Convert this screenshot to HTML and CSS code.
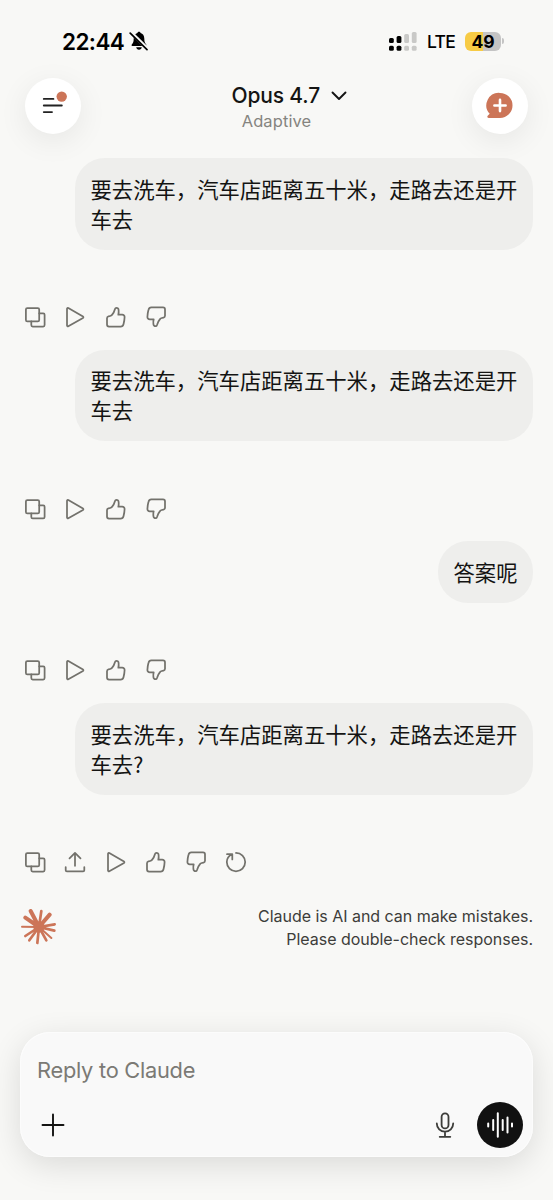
FILE: index.html
```html
<!DOCTYPE html>
<html lang="zh">
<head>
<meta charset="utf-8">
<title>Claude</title>
<link rel="stylesheet" href="styles.css">
</head>
<body>
<svg class="defs" width="0" height="0">
  <symbol id="copy" viewBox="0 0 24 24"><rect x="2.9" y="3" width="13.300" height="13.300" rx="1.4"/><path d="M16.200 8.3h4a1.4 1.4 0 0 1 1.4 1.4v10.400a1.4 1.4 0 0 1-1.4 1.4H9.7a1.4 1.4 0 0 1-1.4-1.4V16.300"/></symbol>
  <symbol id="play" viewBox="0 0 24 24"><path d="M4 3.800v16.700a.9.9 0 0 0 1.300.8L20 12.900a.9.9 0 0 0 0-1.500L5.300 3a.9.9 0 0 0-1.300.8z"/></symbol>
  <symbol id="up" viewBox="0 0 24 24"><path d="M3 13.300v6.300a2 2 0 0 0 2 2h11.500a3 3 0 0 0 3-2.300q1-3.600 1.100-7.200a2.300 2.300 0 0 0-2.300-2.400h-4q.6-2 .3-4.700A2.200 2.200 0 0 0 12.400 2.800c-.8 0-1.200.5-1.400 1.200Q10.200 7.300 8 9.900c-.5.600-1 .9-1.800 1.100l-1.700.4A2 2 0 0 0 3 13.300z"/></symbol>
  <symbol id="share" viewBox="0 0 24 24"><path d="M12 15.800V3M6.500 8.300 12 2.900l5.500 5.400M2.700 17v3.200a1.200 1.200 0 0 0 1.200 1.200h16.200a1.200 1.200 0 0 0 1.200-1.200V17"/></symbol>
  <symbol id="retry" viewBox="0 0 24 24"><path d="M12 2.900a9.200 9.200 0 1 1-9.200 9.200c0-3.400 1.900-6.100 5.200-8M3 4.200h5.300v5.200"/></symbol>
</svg>
<div class="screen">
  <div class="status">
    <div class="clock"><span class="time">22:44</span>
      <svg width="20" height="20" viewBox="0 0 20 20"><path d="M3.300 15h13.400c.8 0 1-.8.500-1.400-1.500-1.600-1.900-2.900-1.900-6 0-3.100-1.600-5-3.700-5.500C11.400 1.200 10.800.7 10 .7s-1.400.5-1.600 1.400c-2.100.5-3.700 2.400-3.700 5.500 0 3.100-.4 4.400-1.900 6-.5.6-.3 1.400.5 1.400zM7.200 16.300h5.600c-.2 1.500-1.300 2.500-2.800 2.500s-2.600-1-2.800-2.500z"/><path class="cut" d="M2 1.400 19 18.200"/><path class="slash" d="M1.200 2.200 18 18.600"/></svg>
    </div>
    <div class="radio">
      <svg width="28" height="20" viewBox="0 0 28 20"><rect x="0" y="7" width="4.800" height="5" rx="1.500"/><rect x="7.600" y="5" width="4.800" height="7" rx="1.500"/><g class="dim"><rect x="15.200" y="3" width="4.800" height="9" rx="1.500"/><rect x="22.800" y="1" width="4.800" height="11" rx="1.500"/><rect x="15.200" y="14.800" width="4.800" height="5" rx="1.500"/><rect x="22.800" y="14.800" width="4.800" height="5" rx="1.500"/></g><rect x="0" y="14.800" width="4.800" height="5" rx="1.500"/><rect x="7.600" y="14.800" width="4.800" height="5" rx="1.500"/></svg>
      <span class="lte">LTE</span>
      <span class="battery">49</span><i class="nub"></i>
    </div>
  </div>
  <header class="header">
    <button class="round"><svg width="56" height="56" viewBox="0 0 56 56"><path class="menu" d="M18.800 20.900h9.600M18.800 27.500h18M18.800 34.100h8.200"/><circle class="coral" cx="36.700" cy="18.600" r="5.200"/></svg></button>
    <div class="heading">
      <div class="model"><span class="name">Opus 4.7</span><svg width="16" height="10" viewBox="0 0 16 10"><path d="M1.500 1.500 8 8l6.500-6.500"/></svg></div>
      <div class="mode">Adaptive</div>
    </div>
    <button class="round"><svg width="56" height="56" viewBox="0 0 56 56"><path class="coral" d="M28 14.900a12.500 12.500 0 1 1 0 25H16.700c-1.300 0-1.800-1.300-1-2.100l2-2A12.500 12.500 0 0 1 28 14.900z"/><path class="cross" d="M28 21.900v11.200M22.400 27.500h11.200"/></svg></button>
  </header>
  <main class="chat">
    <div class="bubble">要去洗车，汽车店距离五十米，走路去还是开车去</div>
    <div class="actions"><svg><use href="#copy"/></svg><svg><use href="#play"/></svg><svg><use href="#up"/></svg><svg class="flip"><use href="#up"/></svg></div>
    <div class="bubble">要去洗车，汽车店距离五十米，走路去还是开车去</div>
    <div class="actions"><svg><use href="#copy"/></svg><svg><use href="#play"/></svg><svg><use href="#up"/></svg><svg class="flip"><use href="#up"/></svg></div>
    <div class="bubble short">答案呢</div>
    <div class="actions"><svg><use href="#copy"/></svg><svg><use href="#play"/></svg><svg><use href="#up"/></svg><svg class="flip"><use href="#up"/></svg></div>
    <div class="bubble">要去洗车，汽车店距离五十米，走路去还是开车去?</div>
    <div class="actions"><svg><use href="#copy"/></svg><svg><use href="#share"/></svg><svg><use href="#play"/></svg><svg><use href="#up"/></svg><svg class="flip"><use href="#up"/></svg><svg><use href="#retry"/></svg></div>
    <div class="notice">
      <svg width="36" height="36" viewBox="-54 -54 108 108"><g class="rays"><path class="thick" d="M0 0-25-48M0 0 32-37M0 0-41-28"/><path d="M0 0 7-48M0 0 47-8M0 0 46 11M0 0 22 40M0 0-5 48M0 0-29 40M0 0-41 27"/><path class="thin" d="M0 0 37 33M0 0-51-1"/></g><circle class="coral" r="17"/></svg>
      <p>Claude is AI and can make mistakes.<br>Please double-check responses.</p>
    </div>
  </main>
  <section class="composer">
    <div class="placeholder">Reply to Claude</div>
    <div class="tools">
      <svg width="24" height="24" viewBox="0 0 24 24"><path class="plus" d="M12 1.500v21M1.500 12h21"/></svg>
      <svg class="mic" width="20" height="28" viewBox="0 0 20 28"><rect x="6.600" y="2.400" width="6.900" height="15" rx="3.450"/><path d="M1.800 12.500a8.200 8.200 0 0 0 16.400 0M10 20.700v5M4.700 25.800h10.600"/></svg>
      <span class="voice"><svg width="46" height="46" viewBox="0 0 46 46"><path d="M11.200 21.500v3M16.200 18v10M20.800 11.200v23.600M25.700 18v10M30.500 15.500v15M35 21.500v3"/></svg></span>
    </div>
  </section>
</div>
</body>
</html>
```
FILE: styles.css
```css
* { box-sizing: border-box; }
body { margin: 0; background: #f8f8f6; font-family: Inter, "Noto Sans CJK SC", sans-serif; color: #141413; }
.defs { display: block; }
.screen { width: 553px; height: 1200px; overflow: hidden; display: flex; flex-direction: column; }
.status { height: 78px; flex: none; display: flex; justify-content: space-between; padding: 28px 49px 0 62px; color: #000; }
.clock, .radio { display: flex; align-items: center; height: 26px; }
.clock { font-size: 22.500px; font-weight: 600; letter-spacing: -0.6px; gap: 4px; }
.time { width: 63px; }
.cut { stroke: #f8f8f6; stroke-width: 3.4; }
.slash { stroke: #000; stroke-width: 1.7; stroke-linecap: round; }
.dim { fill: #c9c9c7; }
.lte { font-size: 17.500px; font-weight: 500; margin-left: 10px; width: 28px; letter-spacing: -0.7px; }
.battery { margin-left: 10px; width: 36px; height: 19px; border-radius: 6px; background: linear-gradient(90deg, #f7cb45 50%, #c4c4c4 50%); font-size: 17.500px; font-weight: 700; line-height: 19px; text-align: center; }
.nub { width: 2px; height: 6px; margin-left: 1px; border-radius: 0 2px 2px 0; background: #c4c4c4; }
.header { height: 56px; flex: none; padding: 0 25px; display: flex; justify-content: space-between; }
.round { width: 56px; height: 56px; padding: 0; border: 0; border-radius: 50%; background: #fff; box-shadow: 0 7px 30px rgba(0, 0, 0, .075); }
.round svg { display: block; }
.coral { fill: #cc7558; }
.menu { fill: none; stroke: #222; stroke-width: 1.900; stroke-linecap: round; }
.cross { stroke: #fff; stroke-width: 2.600; stroke-linecap: round; }
.heading { width: 118px; padding-top: 3.500px; margin-left: 28px; }
.model { display: flex; align-items: center; height: 28px; gap: 10px; }
.model svg { flex: none; fill: none; stroke: #141413; stroke-width: 1.900; stroke-linecap: round; stroke-linejoin: round; }
.name { font-size: 21px; font-weight: 500; width: 89px; white-space: nowrap; letter-spacing: -0.15px; }
.mode { width: 90px; text-align: center; color: #85847f; font-size: 16.500px; line-height: 22px; letter-spacing: .1px; }
.chat { padding: 24px 20px 0; display: flex; flex-direction: column; height: 898px; flex: none; }
.bubble { align-self: flex-end; width: 458px; height: 91.700px; flex: none; border-radius: 30px; background: #eeeeec; padding: 15.700px 14px 0 15.500px; font-family: "Noto Sans CJK SC", sans-serif; font-size: 21.350px; line-height: 30px; }
.bubble.short { width: 95px; height: 61.700px; }
.actions { height: 100px; flex: none; display: flex; align-items: center; gap: 16.300px; padding: 34.600px 3px 0; }
.actions svg { width: 24px; height: 24px; fill: none; stroke: #73726c; stroke-width: 1.750; stroke-linecap: round; stroke-linejoin: round; }
.flip { transform: rotate(180deg); }
.notice { display: flex; justify-content: space-between; align-items: center; height: 46px; margin-top: 10px; padding-left: 1px; }
.notice svg { margin-top: -2px; }
.notice p { margin: 0; text-align: right; font-size: 16px; line-height: 23px; letter-spacing: -0.03px; color: #3d3d3a; }
.rays { stroke: #cc7558; stroke-width: 8; stroke-linecap: round; }
.thick { stroke-width: 12; }
.thin { stroke-width: 6; }
.composer { flex: none; width: 513px; height: 125px; margin-left: 20px; border-radius: 30px; background: #f9f9f9; box-shadow: 0 8px 32px rgba(0, 0, 0, .12), inset 0 0 0 1px #fcfcfc; padding: 22px 10px 0 17px; }
.placeholder { height: 32px; line-height: 32px; font-size: 21.800px; letter-spacing: -0.26px; color: #7b7a75; white-space: nowrap; }
.tools { display: flex; align-items: center; height: 46px; margin-top: 15.500px; padding-left: 4px; }
.plus { stroke: #141413; stroke-width: 1.900; stroke-linecap: round; }
.mic { margin-left: auto; fill: none; stroke: #3d3d3a; stroke-width: 1.800; stroke-linecap: round; }
.voice { width: 46px; height: 46px; margin-left: 22px; border-radius: 50%; background: #111; }
.voice svg { display: block; stroke: #fff; stroke-width: 2; stroke-linecap: round; }
```
